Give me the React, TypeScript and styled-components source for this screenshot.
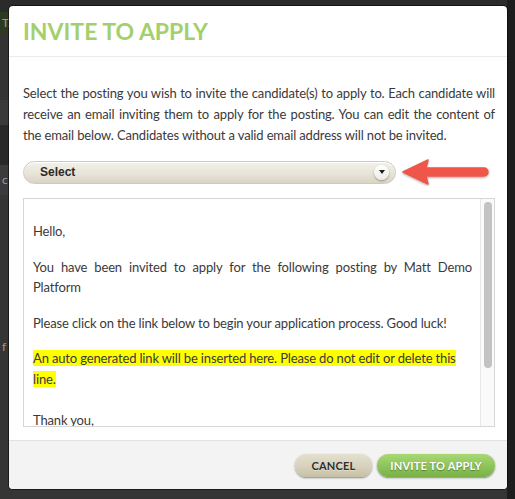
import React from "react";
import styled, { createGlobalStyle } from "styled-components";

const Global = createGlobalStyle`
  html, body { margin: 0; padding: 0; }
  body { background: #2d2d2d; font-family: Lato, "Open Sans", sans-serif; overflow: hidden; }
`;

const Page = styled.div`
  position: relative;
  width: 515px;
  height: 499px;
  background: #2e2e2e;
  overflow: hidden;
`;

const BgRow = styled.div<{ $h: number; $bg: string }>`
  height: ${(p) => p.$h}px;
  background: ${(p) => p.$bg};
  color: #9a9a9a;
  font-size: 12px;
  line-height: ${(p) => p.$h}px;
  padding-left: 2px;
`;

const RightShade = styled.div`
  position: absolute;
  top: 0;
  right: 0;
  width: 8px;
  height: 100%;
  background: #1d1d1d;
`;

const Modal = styled.div`
  position: absolute;
  left: 9px;
  top: 6px;
  width: 498px;
  height: 483px;
  background: #fff;
  border-radius: 4px;
  display: flex;
  flex-direction: column;
  overflow: hidden;
  box-shadow: 0 0 0 1px rgba(0, 0, 0, 0.5);
`;

const Header = styled.div`
  height: 50px;
  flex: none;
  border-bottom: 1px solid #ebebeb;
  display: flex;
  align-items: center;
  padding-left: 14px;
`;

const Title = styled.h1`
  margin: 0;
  font-family: Lato, sans-serif;
  font-weight: 700;
  font-size: 23px;
  letter-spacing: 0;
  color: #a3d06c;
`;

const Body = styled.div`
  flex: 1;
  min-height: 0;
  padding: 26px 12px 0 14px;
  display: flex;
  flex-direction: column;
`;

const Intro = styled.p`
  margin: 0;
  font-size: 13px;
  letter-spacing: -0.15px;
  line-height: 21px;
  color: #3a3a3a;
  text-align: justify;
`;

const SelectRow = styled.div`
  display: flex;
  align-items: center;
  margin-top: 14px;
  height: 24px;
  flex: none;
`;

const SelectBox = styled.div`
  width: 373px;
  height: 23px;
  box-sizing: border-box;
  border-radius: 12px;
  background: linear-gradient(#f3f1ea, #e6e2d6 60%, #d9d4c5);
  border: 1px solid #cfcabb;
  box-shadow: inset 0 1px 0 #fff;
  display: flex;
  align-items: center;
  justify-content: space-between;
  padding: 0 6px 0 16px;
`;

const SelectLabel = styled.span`
  font-family: "Liberation Sans", Arial, sans-serif;
  font-weight: 700;
  font-size: 12px;
  color: #2a2a2a;
`;

const Knob = styled.span`
  width: 15px;
  height: 15px;
  border-radius: 50%;
  background: linear-gradient(#ffffff, #ecebe6);
  box-shadow: 0 1px 2px rgba(0, 0, 0, 0.35);
  display: flex;
  align-items: center;
  justify-content: center;
`;

const Arrow = styled.svg`
  margin-left: 4px;
  flex: none;
`;

const Editor = styled.div`
  margin-top: 14px;
  height: 229px;
  flex: none;
  box-sizing: border-box;
  border: 1px solid #d6d6d6;
  display: flex;
`;

const EditorContent = styled.div`
  flex: 1;
  min-width: 0;
  overflow: hidden;
  padding: 22px 8px 0 9px;
  font-size: 13px;
  letter-spacing: -0.15px;
  line-height: 20.5px;
  color: #3a3a3a;
`;

const ScrollTrack = styled.div`
  width: 14px;
  flex: none;
  box-sizing: border-box;
  background: #fafafa;
  border-left: 1px solid #e8e8e8;
  padding: 3px 2px 0 3px;
`;

const Thumb = styled.div`
  height: 166px;
  width: 8px;
  border-radius: 4px;
  background: #c3c3c3;
`;

const Para = styled.p<{ $top?: number; $left?: boolean }>`
  margin: ${(p) => p.$top ?? 15}px 0 0;
  text-align: ${(p) => (p.$left ? "left" : "justify")};
`;

const Mark = styled.span`
  background: #ffff00;
`;

const Footer = styled.div`
  height: 48px;
  flex: none;
  border-top: 1px solid #e2e2e2;
  background: #f3f3f3;
  display: flex;
  align-items: center;
  justify-content: flex-end;
  gap: 5px;
  padding-right: 12px;
`;

const Button = styled.button<{ $primary?: boolean }>`
  height: 23px;
  width: ${(p) => (p.$primary ? 118 : 77)}px;
  border: none;
  border-radius: 12px;
  font-family: Lato, sans-serif;
  font-weight: 700;
  font-size: 11px;
  letter-spacing: 0.2px;
  cursor: pointer;
  color: ${(p) => (p.$primary ? "#fff" : "#2e2e2e")};
  text-shadow: ${(p) => (p.$primary ? "0 1px 1px rgba(0,0,0,0.35)" : "0 1px 0 rgba(255,255,255,0.4)")};
  background: ${(p) =>
    p.$primary
      ? "linear-gradient(#a9d873, #8cc35a 55%, #79b147)"
      : "linear-gradient(#e4e0cf, #d6d1bb 55%, #c6c0a5)"};
  box-shadow: 0 1px 2px rgba(0, 0, 0, 0.45);
`;

export default function App() {
  return (
    <>
      <Global />
      <Page>
        <BgRow $h={12} $bg="#2b2b2b" />
        <BgRow $h={21} $bg="#2c3b20">TA</BgRow>
        <BgRow $h={67} $bg="#333333" />
        <BgRow $h={25} $bg="#3a3a3a" />
        <BgRow $h={40} $bg="#282828" />
        <BgRow $h={30} $bg="#3b3b3b">c</BgRow>
        <BgRow $h={304} $bg="#353535">f</BgRow>
        <RightShade />
        <Modal>
          <Header>
            <Title>INVITE TO APPLY</Title>
          </Header>
          <Body>
            <Intro>
              Select the posting you wish to invite the candidate(s) to apply to. Each candidate will
              receive an email inviting them to apply for the posting. You can edit the content of
              the email below. Candidates without a valid email address will not be invited.
            </Intro>
            <SelectRow>
              <SelectBox>
                <SelectLabel>Select</SelectLabel>
                <Knob>
                  <svg width="6" height="4" viewBox="0 0 6 4">
                    <path d="M0 0 L6 0 L3 4 Z" fill="#222" />
                  </svg>
                </Knob>
              </SelectBox>
              <Arrow width="92" height="28" viewBox="0 0 92 28">
                <defs>
                  <filter id="sh" x="-10%" y="-20%" width="120%" height="150%">
                    <feDropShadow dx="0" dy="1" stdDeviation="1" floodColor="#000" floodOpacity="0.35" />
                  </filter>
                </defs>
                <path
                  d="M3 14 L28 2 L26 10 L84 10 A4 4 0 0 1 84 18 L26 18 L28 26 Z"
                  fill="#ef5549"
                  stroke="#ef5549"
                  strokeLinejoin="round"
                  strokeWidth="1.5"
                  filter="url(#sh)"
                />
              </Arrow>
            </SelectRow>
            <Editor>
              <EditorContent>
                <Para $top={0}>Hello,</Para>
                <Para>You have been invited to apply for the following posting by Matt Demo Platform</Para>
                <Para>Please click on the link below to begin your application process. Good luck!</Para>
                <Para $left>
                  <Mark>An auto generated link will be inserted here. Please do not edit or delete this line.</Mark>
                </Para>
                <Para $top={21}>Thank you,</Para>
                <Para $top={0}>Matt Demo Platform</Para>
              </EditorContent>
              <ScrollTrack>
                <Thumb />
              </ScrollTrack>
            </Editor>
          </Body>
          <Footer>
            <Button>CANCEL</Button>
            <Button $primary>INVITE TO APPLY</Button>
          </Footer>
        </Modal>
      </Page>
    </>
  );
}
